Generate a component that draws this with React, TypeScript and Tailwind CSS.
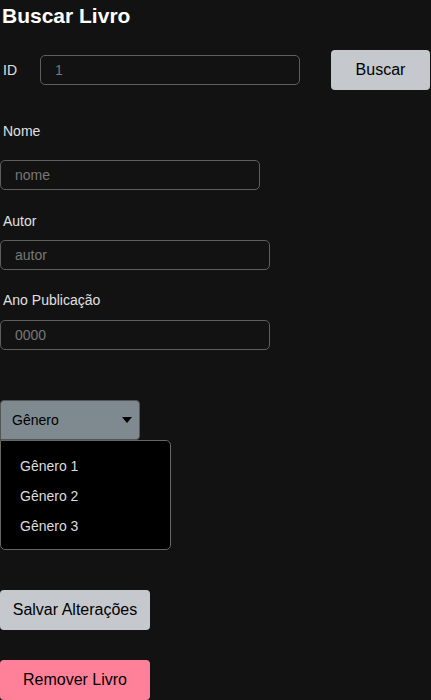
import React from "react";

export default function App() {
  return (
    <div className="min-h-screen bg-[#121212] text-[#e0e0e0]" style={{ fontFamily: '"Liberation Sans", Arial, sans-serif' }}>
      <h1 className="pl-[2px] pt-[4px] text-[21px] font-bold leading-[24px] text-white">Buscar Livro</h1>
      <div className="mt-[22px] flex items-center h-[40px]">
        <span className="w-[40px] pl-[3px] text-[14px]">ID</span>
        <input
          placeholder="1"
          className="h-[30px] w-[260px] rounded-[5px] border border-[#5e5e5e] bg-transparent px-[14px] text-[14px] text-[#ddd] placeholder:text-[#777] outline-none"
        />
        <button className="ml-[31px] h-[40px] w-[99px] rounded-[4px] bg-[#c5c8cd] text-[16px] text-black">Buscar</button>
      </div>
      <div className="mt-[33px] pl-[3px] text-[14px] leading-[16px]">Nome</div>
      <input
        placeholder="nome"
        className="mt-[21px] block h-[30px] w-[260px] rounded-[5px] border border-[#5e5e5e] bg-transparent px-[14px] text-[14px] placeholder:text-[#777] outline-none"
      />
      <div className="mt-[23px] pl-[3px] text-[14px] leading-[16px]">Autor</div>
      <input
        placeholder="autor"
        className="mt-[11px] block h-[30px] w-[270px] rounded-[5px] border border-[#5e5e5e] bg-transparent px-[14px] text-[14px] placeholder:text-[#777] outline-none"
      />
      <div className="mt-[22px] pl-[3px] text-[14px] leading-[16px]">Ano Publicação</div>
      <input
        placeholder="0000"
        className="mt-[12px] block h-[30px] w-[270px] rounded-[5px] border border-[#5e5e5e] bg-transparent px-[14px] text-[14px] placeholder:text-[#777] outline-none"
      />
      <div className="mt-[50px] flex h-[40px] w-[140px] items-center justify-between rounded-t-[4px] rounded-br-[4px] border border-[#555] bg-[#7f8a90] pl-[11px] pr-[7px] text-[14px] text-black">
        <span>Gênero</span>
        <svg width="10" height="6" viewBox="0 0 10 6"><path d="M0 0h10L5 6z" fill="#000" /></svg>
      </div>
      <div className="flex h-[110px] w-[171px] flex-col rounded-b-[5px] rounded-tr-[5px] border border-[#666] bg-black pt-[10px] pl-[19px] text-[14px] text-[#ddd]">
        <div className="h-[30px] leading-[30px]">Gênero 1</div>
        <div className="h-[30px] leading-[30px]">Gênero 2</div>
        <div className="h-[30px] leading-[30px]">Gênero 3</div>
      </div>
      <button className="mt-[40px] block h-[40px] w-[150px] rounded-[4px] bg-[#c5c8cd] text-[16px] text-black">Salvar Alterações</button>
      <button className="mt-[30px] block h-[40px] w-[150px] rounded-[4px] bg-[#ff8199] text-[16px] text-black">Remover Livro</button>
    </div>
  );
}
